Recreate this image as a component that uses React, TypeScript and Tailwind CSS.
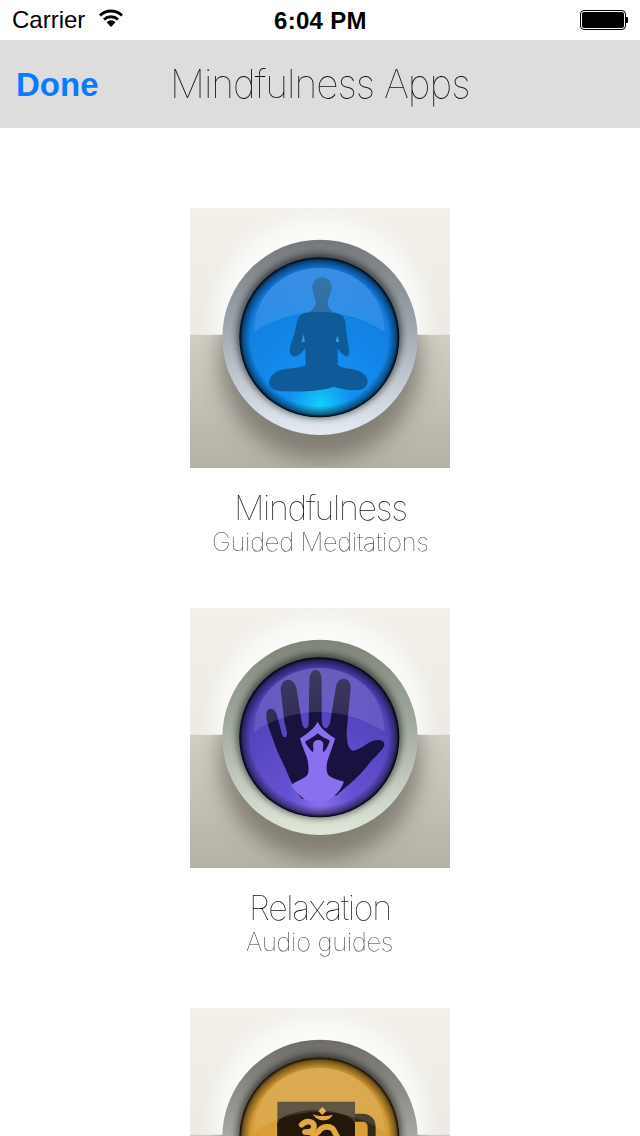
import React from "react";

type Palette = {
  id: string;
  ringTop: string;
  ringMid: string;
  ringBottom: string;
  glassEdge: string;
  glassMid: string;
  glassGlow: string;
  children: React.ReactNode;
};

function AppIcon({ id, ringTop, ringMid, ringBottom, glassEdge, glassMid, glassGlow, children }: Palette) {
  return (
    <svg viewBox="0 0 780 780" className="block w-[260px] h-[260px] shrink-0">
      <defs>
        <linearGradient id={`${id}-top`} x1="0" y1="0" x2="0" y2="1">
          <stop offset="0" stopColor="#f2f0e9" />
          <stop offset="1" stopColor="#eceae3" />
        </linearGradient>
        <linearGradient id={`${id}-bot`} x1="0" y1="0" x2="0" y2="1">
          <stop offset="0" stopColor="#d1cec4" />
          <stop offset="1" stopColor="#b4b1a7" />
        </linearGradient>
        <filter id={`${id}-soft`} x="-30%" y="-30%" width="160%" height="160%">
          <feGaussianBlur stdDeviation="32" />
        </filter>
        <filter id={`${id}-edge`} x="-10%" y="-10%" width="120%" height="120%">
          <feGaussianBlur stdDeviation="2" />
        </filter>
        <filter id={`${id}-inner`} x="-20%" y="-20%" width="140%" height="140%">
          <feGaussianBlur stdDeviation="10" />
        </filter>
        <filter id={`${id}-hiblur`} x="-5%" y="-5%" width="110%" height="110%">
          <feGaussianBlur stdDeviation="1.5" />
        </filter>
        <linearGradient id={`${id}-ring`} x1="0" y1="0" x2="0" y2="1">
          <stop offset="0" stopColor={ringTop} />
          <stop offset="0.45" stopColor={ringMid} />
          <stop offset="1" stopColor={ringBottom} />
        </linearGradient>
        <radialGradient id={`${id}-glass`} cx="390" cy="590" r="470" gradientUnits="userSpaceOnUse">
          <stop offset="0" stopColor={glassGlow} />
          <stop offset="0.2" stopColor={glassMid} />
          <stop offset="1" stopColor={glassEdge} />
        </radialGradient>
        <radialGradient id={`${id}-rim`} cx="388" cy="388" r="240" gradientUnits="userSpaceOnUse">
          <stop offset="0.86" stopColor="#000000" stopOpacity="0" />
          <stop offset="0.96" stopColor="#000000" stopOpacity="0.45" />
          <stop offset="1" stopColor="#000000" stopOpacity="1" />
        </radialGradient>
        <linearGradient id={`${id}-hi`} x1="0" y1="0" x2="0" y2="1">
          <stop offset="0" stopColor="#ffffff" stopOpacity="0.17" />
          <stop offset="1" stopColor="#ffffff" stopOpacity="0.1" />
        </linearGradient>
        <clipPath id={`${id}-clip`}>
          <circle cx="388" cy="388" r="240" />
        </clipPath>
        <clipPath id={`${id}-upper`}>
          <rect width="780" height="380" />
        </clipPath>
        <clipPath id={`${id}-lower`}>
          <rect y="380" width="780" height="400" />
        </clipPath>
      </defs>

      <rect width="780" height="380" fill={`url(#${id}-top)`} />
      <rect y="380" width="780" height="400" fill={`url(#${id}-bot)`} />
      <g clipPath={`url(#${id}-upper)`}>
        <circle cx="390" cy="350" r="320" fill="#ffffff" opacity="0.75" filter={`url(#${id}-soft)`} />
      </g>
      <g clipPath={`url(#${id}-lower)`}>
        <circle cx="390" cy="455" r="300" fill="#6f6c62" opacity="0.75" filter={`url(#${id}-soft)`} />
      </g>

      <circle cx="390" cy="388" r="293" fill={`url(#${id}-ring)`} filter={`url(#${id}-edge)`} />
      <circle cx="388" cy="384" r="248" fill="#000000" opacity="0.5" filter={`url(#${id}-inner)`} />
      <circle cx="388" cy="388" r="240" fill={`url(#${id}-glass)`} />
      <g clipPath={`url(#${id}-clip)`}>{children}</g>
      <path
        d="M192 372 C192 260 280 180 388 180 C496 180 584 260 584 372 C530 335 460 312 388 312 C316 312 246 335 192 372 Z"
        fill={`url(#${id}-hi)`}
        filter={`url(#${id}-hiblur)`}
      />
      <circle cx="388" cy="388" r="240" fill={`url(#${id}-rim)`} />
    </svg>
  );
}

function Meditator() {
  return (
    <g>
      <path
        fill="#0f5a98"
        d="M396 208 C378 208 366 222 367 242 C368 258 376 268 377 282 C377 296 370 306 355 312 C335 316 325 322 320 345 C315 370 310 390 302 410 C296 430 300 446 315 445 C328 444 338 430 346 420 L347 470 C340 476 320 480 290 482 C255 486 237 505 237 525 C238 545 260 550 290 550 C340 552 400 548 432 536 C450 542 480 548 505 546 C525 544 534 532 533 518 C530 498 510 486 480 482 C460 480 450 476 443 470 L443 420 C450 432 462 445 472 445 C480 440 478 425 474 405 C470 385 468 360 466 340 C462 322 448 316 430 312 C420 306 413 296 413 282 C414 268 424 258 425 242 C426 222 414 208 396 208 Z"
      />
      <path fill="#3b9ae8" d="M340 378 L345 402 L335 402 Z M442 382 L448 402 L437 402 Z" />
    </g>
  );
}

function HandFigure() {
  return (
    <g>
      <path
        fill="#17123f"
        d="M335 572 C318 550 302 522 290 490 L262 430 L240 370 C232 345 226 325 230 312 C236 298 252 298 260 318 L275 375 C278 392 292 392 291 374 L283 340 L272 245 C272 225 284 215 295 215 C308 215 318 228 320 245 L335 340 C338 362 350 370 356 350 L358 215 C360 195 368 186 376 186 C388 186 395 198 395 215 L395 340 C398 365 412 368 420 345 L438 235 C442 218 452 212 460 212 C474 212 482 224 482 240 L470 370 C470 400 474 425 488 428 C505 428 530 405 550 398 C570 392 585 398 583 412 C578 428 555 445 535 470 C515 495 490 520 470 535 L440 562 Z"
      />
      <path
        fill="#8a70ee"
        fillRule="evenodd"
        d="M383 341 C392 362 415 378 435 391 C432 405 425 422 415 451 C408 470 408 490 415 501 C425 512 445 516 462 521 C455 540 445 552 435 561 C420 585 350 590 330 562 C318 552 308 542 303 531 C312 522 338 516 352 501 C358 490 356 465 350 446 C342 428 335 408 330 391 C350 378 373 362 383 341 Z M383 376 C372 386 358 394 345 401 C350 412 358 422 367 432 C372 430 370 420 369 412 C369 402 376 396 385 396 C394 396 401 402 400 412 C399 420 397 430 402 432 C410 422 415 410 420 398 C408 392 394 386 383 376 Z"
      />
    </g>
  );
}

function CupFigure() {
  return (
    <g>
      <path fill="#4a3d28" d="M262 281 H495 V600 H262 Z" />
      <ellipse cx="378" cy="351" rx="117" ry="45" fill="#23170a" />
      <rect x="262" y="351" width="233" height="250" fill="#23170a" />
      <path fill="none" stroke="#33291a" strokeWidth="24" d="M495 329 H518 C535 329 545 340 545 358 V420" />
      <g fill="none" stroke="#e2a940" strokeWidth="17" strokeLinecap="round" strokeLinejoin="round">
        <path d="M335 350 C350 335 372 340 372 356 C372 372 355 372 345 372 C365 372 382 378 378 400" />
        <path d="M385 372 C395 352 425 352 432 368 C436 378 442 385 445 395" />
      </g>
      <path fill="#e2a940" d="M368 318 C380 326 412 326 428 320 C420 340 385 346 368 318 Z" />
      <path fill="#e2a940" d="M397 297 L409 309 L397 321 L385 309 Z" />
    </g>
  );
}

const thin = "font-thin font-['Inter','Roboto',sans-serif] will-change-transform";

function AppEntry({ title, subtitle, icon }: { title?: string; subtitle?: string; icon: React.ReactNode }) {
  return (
    <section className="flex flex-col items-center h-[400px] shrink-0">
      {icon}
      {title && (
        <h2 className={`mt-[20px] text-[34px] leading-[40px] tracking-[-1.35px] text-[#111111] ${thin}`}>{title}</h2>
      )}
      {subtitle && (
        <p className={`text-[25.5px] leading-[28px] tracking-[-0.3px] text-[#333333] ${thin}`}>{subtitle}</p>
      )}
    </section>
  );
}

export default function App() {
  return (
    <div className="w-[640px] h-[1136px] overflow-hidden bg-white flex flex-col font-['Liberation_Sans',Arial,sans-serif]">
      <header className="relative h-[40px] shrink-0 flex items-center justify-between px-[12px] text-black">
        <div className="flex items-center gap-[14px]">
          <span className="text-[24px] leading-none">Carrier</span>
          <svg viewBox="0 0 24 18" className="w-[24px] h-[18px] -mt-[4px]">
            <path d="M1 6.5 A16 16 0 0 1 23 6.5" fill="none" stroke="#000" strokeWidth="3" />
            <path d="M5 10.5 A10.5 10.5 0 0 1 19 10.5" fill="none" stroke="#000" strokeWidth="3" />
            <path d="M12 18 L7.6 13.2 A6.2 6.2 0 0 1 16.4 13.2 Z" fill="#000" />
          </svg>
        </div>
        <span className="absolute left-[274px] top-[8px] text-[24px] leading-[26px] font-bold tracking-[0.3px]">6:04 PM</span>
        <div className="flex items-center">
          <div className="w-[46px] h-[20px] rounded-[4px] border border-black p-[1px]">
            <div className="w-full h-full bg-black rounded-[2px]" />
          </div>
          <div className="w-[2px] h-[6px] bg-black rounded-r-[1px]" />
        </div>
      </header>

      <nav className="h-[88px] shrink-0 bg-[#dddddd] flex items-center">
        <span className="ml-[16px] text-[#0a7aff] text-[33px] leading-none font-bold">Done</span>
        <h1 className={`ml-[71px] -mt-[2px] text-[39px] leading-none tracking-[-1px] text-[#111111] ${thin}`}>Mindfulness Apps</h1>
      </nav>

      <main className="flex flex-col items-center pt-[80px]">
        <AppEntry
          title="Mindfulness"
          subtitle="Guided Meditations"
          icon={
            <AppIcon
              id="blue"
              ringTop="#74787c"
              ringMid="#9fa7b0"
              ringBottom="#e4ebf2"
              glassEdge="#1272d8"
              glassMid="#1290f0"
              glassGlow="#12d0fa"
            >
              <Meditator />
            </AppIcon>
          }
        />
        <AppEntry
          title="Relaxation"
          subtitle="Audio guides"
          icon={
            <AppIcon
              id="violet"
              ringTop="#7f8479"
              ringMid="#a3aca0"
              ringBottom="#e0e8da"
              glassEdge="#4538a8"
              glassMid="#6652d4"
              glassGlow="#8a70ee"
            >
              <HandFigure />
            </AppIcon>
          }
        />
        <AppEntry
          icon={
            <AppIcon
              id="amber"
              ringTop="#6e6c68"
              ringMid="#a4a29c"
              ringBottom="#dedcd6"
              glassEdge="#cf9630"
              glassMid="#e0a63e"
              glassGlow="#f0b548"
            >
              <CupFigure />
            </AppIcon>
          }
        />
      </main>
    </div>
  );
}
